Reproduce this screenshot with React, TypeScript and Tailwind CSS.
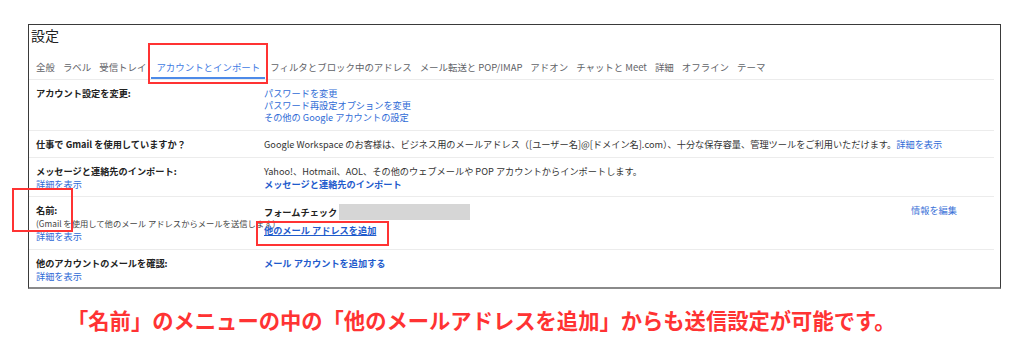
const jp = "font-['Noto_Sans_CJK_JP','Noto_Sans',sans-serif]";

const tabs = [
  "全般",
  "ラベル",
  "受信トレイ",
  "アカウントとインポート",
  "フィルタとブロック中のアドレス",
  "メール転送と POP/IMAP",
  "アドオン",
  "チャットと Meet",
  "詳細",
  "オフライン",
  "テーマ",
];

function Label({ children }: { children: React.ReactNode }) {
  return <div className="font-bold text-[#222]">{children}</div>;
}

function More() {
  return <div className="text-[#2f6bd6]">詳細を表示</div>;
}

export default function App() {
  return (
    <div className={`relative w-[1024px] h-[346px] bg-white overflow-hidden ${jp}`}>
      {/* screenshot frame */}
      <div className="ml-[28px] mt-[24px] w-[973px] h-[265px] border border-[#3a3a3a] border-b-2 border-b-[#8a8a8a]">
        <div className="pl-[2px] pt-[1px] text-[14px] leading-[18px] text-[#222]">設定</div>

        {/* tabs */}
        <div className="mt-[12px] mr-[6px] pl-[7px] flex gap-[8px] border-b border-[#ececec] text-[9.45px] leading-[14px] text-[#5f6368]">
          {tabs.map((t) =>
            t === "アカウントとインポート" ? (
              <div
                key={t}
                className="pt-[4px] pb-[3px] px-[5px] -mx-[3px] border-b-2 border-[#4d8ae8] text-[#3f7be3] whitespace-nowrap"
              >
                {t}
              </div>
            ) : (
              <div key={t} className="pt-[4px] pb-[3px] border-b-2 border-transparent whitespace-nowrap">
                {t}
              </div>
            )
          )}
        </div>

        {/* rows */}
        <div className="mr-[6px] text-[9.2px] text-[#333]">
          <div className="flex h-[51px] pt-[7px] pl-[7px] border-b border-[#ececec] leading-[12px]">
            <div className="w-[228px]">
              <Label>アカウント設定を変更:</Label>
            </div>
            <div className="text-[#2f6bd6]">
              <div>パスワードを変更</div>
              <div>パスワード再設定オプションを変更</div>
              <div>その他の Google アカウントの設定</div>
            </div>
          </div>

          <div className="flex h-[27px] pt-[7px] pl-[7px] border-b border-[#ececec] leading-[12px]">
            <div className="w-[228px]">
              <Label>仕事で Gmail を使用していますか？</Label>
            </div>
            <div className="whitespace-nowrap">
              Google Workspace のお客様は、ビジネス用のメールアドレス（[ユーザー名]@[ドメイン名].com）、十分な保存容量、管理ツールをご利用いただけます。
              <span className="text-[#2f6bd6]">詳細を表示</span>
            </div>
          </div>

          <div className="flex h-[39px] pt-[7px] pl-[7px] border-b border-[#ececec] leading-[13px]">
            <div className="w-[228px]">
              <Label>メッセージと連絡先のインポート:</Label>
              <More />
            </div>
            <div>
              <div>Yahoo!、Hotmail、AOL、その他のウェブメールや POP アカウントからインポートします。</div>
              <div className="font-bold text-[#1f5bcc]">メッセージと連絡先のインポート</div>
            </div>
          </div>

          <div className="flex h-[53px] pt-[7px] pl-[7px] border-b border-[#ececec] leading-[13px]">
            <div className="w-[228px]">
              <Label>名前:</Label>
              <div className="text-[8.3px] text-[#444] whitespace-nowrap">
                (Gmail を使用して他のメール アドレスからメールを送信します)
              </div>
              <More />
            </div>
            <div className="flex-1 flex pr-[37px]">
              <div className="flex-1">
                <div className="flex items-center gap-[2px]">
                  <span className="font-bold text-[#222]">フォームチェック</span>
                  <span className="w-[131px] h-[16px] bg-[#d6d6d6]" />
                </div>
                <div className="mt-[4px] font-bold text-[#1f5bcc] underline">他のメール アドレスを追加</div>
              </div>
              <div className="text-[#3a72d8]">情報を編集</div>
            </div>
          </div>

          <div className="flex pt-[7px] pl-[7px] leading-[13px]">
            <div className="w-[228px]">
              <Label>他のアカウントのメールを確認:</Label>
              <More />
            </div>
            <div className="font-bold text-[#1f5bcc]">メール アカウントを追加する</div>
          </div>
        </div>
      </div>

      {/* caption */}
      <div className="pl-[67px] pt-[17px] text-[21.3px] leading-[28px] font-bold text-[#ff3333] whitespace-nowrap">
        「名前」のメニューの中の「他のメールアドレスを追加」からも送信設定が可能です。
      </div>

      {/* annotation boxes */}
      <div className="absolute left-[148px] top-[43px] w-[120px] h-[41px] border-2 border-[#ff3333]" />
      <div className="absolute left-[12px] top-[188px] w-[61px] h-[44px] border-2 border-[#ff3333]" />
      <div className="absolute left-[256px] top-[221px] w-[133px] h-[25px] border-2 border-[#ff3333]" />
    </div>
  );
}
